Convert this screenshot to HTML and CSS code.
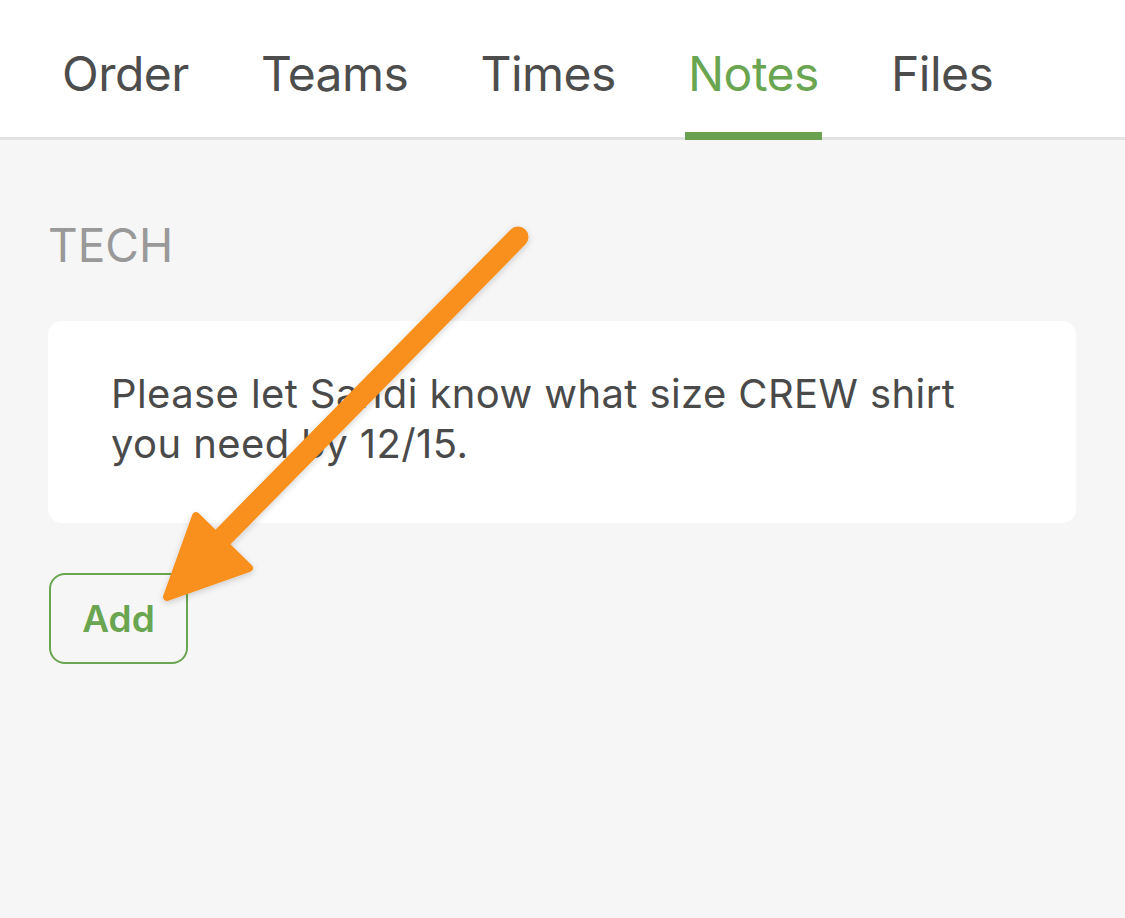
FILE: index.html
```html
<!DOCTYPE html>
<html lang="en">
<head>
  <meta charset="UTF-8" />
  <meta name="viewport" content="width=device-width, initial-scale=1.0" />
  <title>Notes</title>
  <link rel="stylesheet" href="styles.css">
</head>
<body>
  <nav class="tabs">
    <div class="tab">Order</div>
    <div class="tab">Teams</div>
    <div class="tab">Times</div>
    <div class="tab active">Notes</div>
    <div class="tab">Files</div>
  </nav>

  <main class="content">
    <div class="section-title">TECH</div>
    <div class="note-card">
      <p>Please let Sandi know what size CREW shirt you need by 12/15.</p>
    </div>
    <button class="add-btn">Add</button>
  </main>

  <!-- callout arrow pointing at the Add button -->
  <svg class="arrow" width="1125" height="918" viewBox="0 0 1125 918">
    <defs>
      <filter id="shadow" x="-20%" y="-20%" width="140%" height="140%">
        <feDropShadow dx="0" dy="2" stdDeviation="3" flood-color="#000" flood-opacity="0.18" />
      </filter>
    </defs>
    <g filter="url(#shadow)" fill="#f98f1b" stroke="#f98f1b" stroke-linejoin="round" stroke-linecap="round">
      <line x1="518" y1="237" x2="222" y2="538" stroke-width="21" />
      <polygon points="167,597 196,516 249,568" stroke-width="8" />
    </g>
  </svg>
</body>
</html>
```

FILE: styles.css
```css
body {
  margin: 0;
  min-height: 100vh;
  background: #f6f6f6;
  font-family: Inter, "Noto Sans", sans-serif;
  position: relative;
  overflow: hidden;
}

.tabs {
  display: flex;
  gap: 66px;
  height: 137px;
  padding-left: 59px;
  background: #ffffff;
  border-bottom: 3px solid #e3e3e3;
}

.tab {
  position: relative;
  padding: 50px 3px 0;
  font-size: 48px;
  line-height: 48px;
  color: #4d4d4d;
  letter-spacing: -0.5px;
}

.tab.active {
  color: #6aa551;
}

.tab.active::after {
  content: "";
  position: absolute;
  left: 0;
  right: 0;
  bottom: -3px;
  height: 8px;
  background: #6aa150;
}

.content {
  padding: 82px 49px 0 48px;
}

.section-title {
  font-size: 46px;
  line-height: 46px;
  color: #999999;
}

.note-card {
  margin-top: 53px;
  background: #ffffff;
  border-radius: 14px;
  padding: 48px 80px 54px 63px;
}

.note-card p {
  margin: 0;
  font-size: 40px;
  line-height: 50px;
  letter-spacing: 0.4px;
  color: #4a4a4a;
}

.add-btn {
  margin-top: 50px;
  margin-left: 1px;
  width: 139px;
  height: 91px;
  background: transparent;
  border: 2.5px solid #6aa551;
  border-radius: 16px;
  font-family: Inter, "Noto Sans", sans-serif;
  font-size: 37px;
  font-weight: 600;
  color: #6aa551;
  cursor: pointer;
}

.arrow {
  position: absolute;
  top: 0;
  left: 0;
  pointer-events: none;
}
```
